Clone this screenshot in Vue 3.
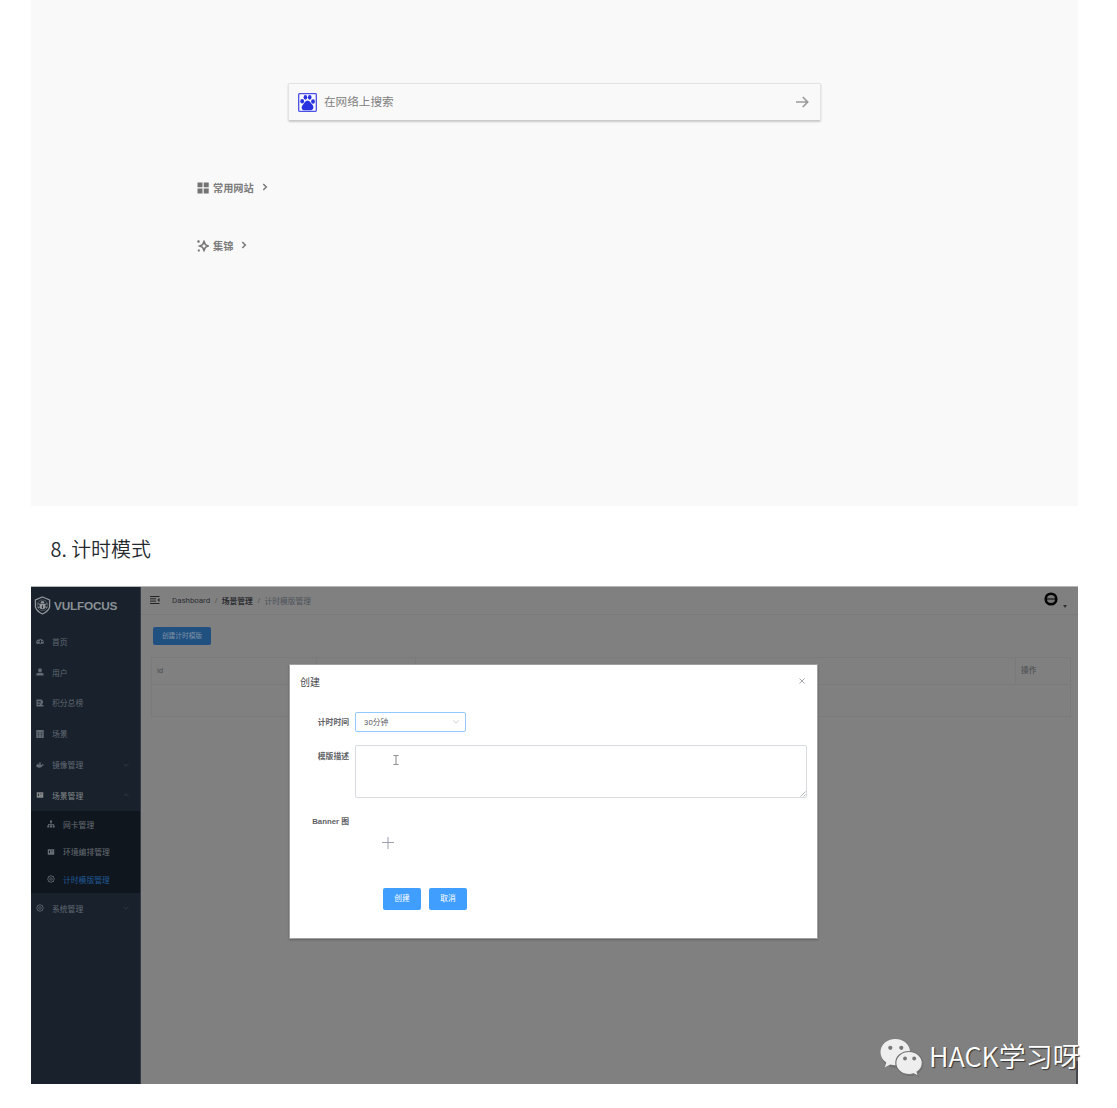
<script setup>
const menu = [
  { label: '首页', icon: 'dash' },
  { label: '用户', icon: 'user' },
  { label: '积分总榜', icon: 'score' },
  { label: '场景', icon: 'grid' },
  { label: '镜像管理', icon: 'docker', arrow: 'down' },
  {
    label: '场景管理',
    icon: 'card',
    arrow: 'up',
    open: true,
    children: [
      { label: '网卡管理', icon: 'tree' },
      { label: '环境编排管理', icon: 'card' },
      { label: '计时模版管理', icon: 'gear', active: true },
    ],
  },
  { label: '系统管理', icon: 'gear', arrow: 'down' },
]

const icons = {
  dash: '<path fill-rule="evenodd" d="M1 13.500A7.500 7.500 0 1 1 15 13.500ZM3 8v2h2V8ZM5 4.500v2h2v-2ZM11.500 8v2h2V8ZM10.500 4 7 9v3h3V9Z"/>',
  user: '<circle cx="8" cy="4.500" r="3.900"/><path d="M.8 15v-2.500Q.8 9.300 5 9.300h6q4.200 0 4.200 3.200V15Z"/>',
  score: '<path fill-rule="evenodd" d="M1 1h10l3 3v5h-2v3h3v3H1ZM3.500 4v1.300h6V4ZM3.500 7v1.300h6V7ZM3.500 10v1.300h4V10Z"/>',
  grid: '<path fill-rule="evenodd" d="M.5 0h15v16H.5ZM1.500 4.500v.7h13v-.7ZM1.500 9.500v.7h13v-.7ZM5.200 5v10h.7V5ZM10.200 5v10h.7V5Z"/>',
  docker: '<path d="M0 8h11q2-.3 2-2.500Q14 6 14.300 7 16 7 16 8q-1 1-2.500 1Q11.500 13.500 6 13.500 1 13.500 0 8ZM2 5.500h8v2H2ZM6 3h4v2H6Z"/>',
  card: '<path fill-rule="evenodd" d="M1.500 2.500h13v11h-13ZM4 5.500v4h2v-4ZM8 5.500v1.200h4V5.500Z"/>',
  tree: '<path d="M6 1h4v4H8.700v3H14v3h1.500v4h-4v-4h1.200V9.300h-4V11H10v4H6v-4h1.300V9.300h-4V11h1.200v4h-4v-4H2V8h5.300V5H6Z"/>',
  gear: '<path fill="none" stroke="currentColor" stroke-width="1.700" d="M8 1.200 10 2.500 13 3l.4 3L15 8l-1.600 2-.4 3-3 .5-2 1.300-2-1.300L3 13l-.4-3L1 8l1.600-2L3 3l3-.5Z"/><circle cx="8" cy="8" r="2.500" fill="none" stroke="currentColor" stroke-width="1.500"/>',
}
</script>

<template>
  <main class="article">
    <section class="browser">
      <div class="search">
        <svg class="baidu" viewBox="0 0 19 19">
          <rect x=".7" y=".7" width="17.600" height="17.600" rx=".8" fill="#fafaff" stroke="#4a50e4" stroke-width="1.300" />
          <g fill="#2932df">
            <ellipse cx="4.200" cy="8.300" rx="1.900" ry="2.200" />
            <ellipse cx="7.400" cy="4.300" rx="1.800" ry="2.400" />
            <ellipse cx="11.700" cy="4.300" rx="1.800" ry="2.400" />
            <ellipse cx="15" cy="8.500" rx="1.900" ry="2.200" />
            <path d="M9.600 7.600c2.300 0 2.700 2.300 4.300 3.700 2.500 2 1.800 5.900-1.100 5.900H6.500c-3 0-3.900-3.600-1.400-5.800C6.800 9.900 7.400 7.600 9.600 7.600Z" />
          </g>
        </svg>
        <span class="placeholder">在网络上搜索</span>
        <svg class="go" viewBox="0 0 14 12"><path d="M1 6h11.500M7.800 1l4.900 5-4.900 5" fill="none" stroke="#9a9a9a" stroke-width="1.700" /></svg>
      </div>
      <div class="shortcut first">
        <svg class="sicon" viewBox="0 0 12 12" fill="#747474"><path d="M.5.500h5v4.800h-5zM6.700.500h5v4.800h-5zM.5 6.600h5v4.800h-5zM6.700 6.600h5v4.800h-5z" /></svg>
        <span>常用网站</span>
        <svg class="chev" viewBox="0 0 6 8"><path d="M1.300 1l3 3-3 3" fill="none" stroke="#777" stroke-width="1.500" /></svg>
      </div>
      <div class="shortcut second">
        <svg class="sicon" viewBox="0 0 12 12" fill="none" stroke="#747474" stroke-width="1.500"><path d="M7 1.400 8.400 4.600 11.500 6 8.400 7.400 7 10.600 5.600 7.400 2.500 6 5.600 4.600Z" /><path d="M.3 1.500h2.400M1.500.3v2.400M.8 10.500h2M1.800 9.500v2" /></svg>
        <span>集锦</span>
        <svg class="chev" viewBox="0 0 6 8"><path d="M1.300 1l3 3-3 3" fill="none" stroke="#777" stroke-width="1.500" /></svg>
      </div>
    </section>

    <h2 class="heading">8. 计时模式</h2>

    <section class="shot">
      <aside class="side">
        <div class="brand">
          <svg class="shield" viewBox="0 0 18 20" fill="none" stroke="#929699">
            <path d="M9 1 16.500 4v7.500Q15.500 16 9 19 2.500 16 1.500 11.500V4Z" stroke-width="1.400" />
            <circle cx="9" cy="9.700" r="5.600" stroke-width=".5" />
            <path d="M6 8.300h6v3.400q0 2.300-3 2.300t-3-2.300ZM6.800 7.800q0-2.500 2.200-2.500t2.200 2.500Z" fill="#929699" stroke="none" />
            <path d="M4.200 8l2 1M13.800 8l-2 1M4.200 12l2-.7M13.800 12l-2-.7" stroke-width="1.100" />
            <path d="M9 10v3" stroke="#18212c" stroke-width="1" />
          </svg>
          <span>VULFOCUS</span>
        </div>
        <template v-for="item in menu" :key="item.label">
          <div class="item" :class="{ open: item.open }">
            <svg class="micon" viewBox="0 0 16 16" fill="currentColor" v-html="icons[item.icon]"></svg>
            <span>{{ item.label }}</span>
            <svg v-if="item.arrow" class="arrow" viewBox="0 0 6 4"><path :d="item.arrow === 'down' ? 'M.5.800 3 3.200 5.500.800' : 'M.5 3.200 3 .8 5.500 3.200'" /></svg>
          </div>
          <div v-if="item.children" class="sub">
            <div v-for="c in item.children" :key="c.label" class="subitem">
              <svg class="micon" viewBox="0 0 16 16" fill="currentColor" v-html="icons[c.icon]"></svg>
              <span :class="{ active: c.active }">{{ c.label }}</span>
            </div>
          </div>
        </template>
      </aside>

      <div class="content">
        <header class="nav">
          <svg class="burger" viewBox="0 0 10 8" fill="none" stroke="#242424"><path d="M0 .5h9.500M0 2.800h6M0 5.100h6M0 7.500h9.500" stroke-width="1" /><path d="M9.500 2v4L7.300 4Z" fill="#242424" stroke="none" /></svg>
          <span class="dash">Dashboard</span><i>/</i><b>场景管理</b><i>/</i><span class="last">计时模版管理</span>
          <svg class="avatar" viewBox="0 0 14 14"><circle cx="7" cy="7" r="5.300" fill="#777" stroke="#050505" stroke-width="2.600" /><path d="M3 7h8" stroke="#111" stroke-width="1.200" /></svg>
          <svg class="caret" viewBox="0 0 4 3"><path d="M0 0h4L2 3Z" fill="#303030" /></svg>
        </header>
        <button class="create">创建计时模版</button>
        <div class="table">
          <div class="row head">
            <span>id</span><span></span><span></span><span>操作</span>
          </div>
          <div class="row"></div>
        </div>
      </div>

      <div class="dialog">
        <div class="dhead">
          <span>创建</span>
          <svg class="close" viewBox="0 0 6 6"><path d="M.5.500l5 5M5.500.500l-5 5" stroke="#9a9da3" stroke-width=".9" /></svg>
        </div>
        <div class="field time">
          <label>计时时间</label>
          <div class="select">
            <span>30分钟</span>
            <svg viewBox="0 0 6 4"><path d="M.4.500 3 3.200 5.600.500" fill="none" stroke="#b5b9c1" stroke-width=".7" /></svg>
          </div>
        </div>
        <div class="field desc">
          <label>模版描述</label>
          <div class="textarea">
            <svg class="cursor" viewBox="0 0 6 10"><path d="M.5.500h2L3 1l.5-.5h2M3 1v8M.5 9.500h2L3 9l.5.500h2" fill="none" stroke="#666" stroke-width=".8" /></svg>
            <svg class="grip" viewBox="0 0 6 6"><path d="M.5 5.500l5-5M3.500 5.500l2-2" stroke="#aaa" stroke-width=".9" /></svg>
          </div>
        </div>
        <div class="field banner">
          <label>Banner 图</label>
          <svg class="plus" viewBox="0 0 12 12"><path d="M0 5.500h12M6 0v12" stroke="#9a9fab" stroke-width="1" /></svg>
        </div>
        <div class="actions">
          <button>创建</button>
          <button>取消</button>
        </div>
      </div>

      <div class="watermark">
        <svg viewBox="0 0 44 40">
          <g class="shade" fill="#555" transform="translate(1 1)"><ellipse cx="15" cy="15" rx="14.800" ry="14" /><ellipse cx="29" cy="25" rx="13.300" ry="12" /></g>
          <path fill="#eee" d="M15.300 1C7 1 .5 6.700.5 14.200c0 4.300 2.300 8 5.800 10.400L4.900 29.200l5.400-2.700c1.600.5 3.300.8 5 .8 8.200 0 14.800-5.900 14.800-13.100C30.100 6.900 23.500 1 15.300 1Z" />
          <path fill="#eee" stroke="#737373" stroke-width="1.200" d="M29 13.500c-7.300 0-13.200 5-13.200 11.500S21.700 36.500 29 36.500c1.600 0 3.200-.2 4.600-.7l5 2.600-1.500-4.300C40.300 32 42.300 28.700 42.300 25c0-6.500-6-11.500-13.300-11.500Z" />
          <g fill="#777"><circle cx="10.300" cy="9.800" r="2.100" /><circle cx="21.300" cy="9.800" r="2.100" /><circle cx="25" cy="20.500" r="1.900" /><circle cx="34.200" cy="20.500" r="1.900" /></g>
        </svg>
        <span>HACK学习呀</span>
      </div>
      <div class="edge"></div>
    </section>
  </main>
</template>

<style>
body {
  margin: 0;
  background: #fff;
}
</style>

<style scoped>
* {
  box-sizing: border-box;
}
.article {
  width: 1117px;
  height: 1108px;
  padding: 0 39px 0 31px;
  overflow: hidden;
  font-family: "Liberation Sans", "Noto Sans CJK SC", sans-serif;
}
svg {
  display: block;
  flex: none;
}
button {
  border: 0;
  padding: 0;
  font-family: inherit;
}
.browser {
  height: 506px;
  padding: 83px 0 0 166px;
  background: #f9f9f9;
}
.search {
  width: 533px;
  height: 38px;
  margin-left: 91px;
  padding: 0 11px 0 9px;
  display: flex;
  align-items: center;
  border: 1px solid #e4e4e4;
  border-bottom-color: #ccc;
  border-radius: 2px;
  box-shadow: 0 1px 2px rgba(0, 0, 0, .2);
  color: #808080;
}
.baidu {
  width: 19px;
  height: 19px;
}
.placeholder {
  margin-left: 7px;
  font-size: 11.600px;
  line-height: 18px;
}
.go {
  width: 14px;
  height: 12px;
  margin-left: auto;
}
.shortcut {
  height: 16px;
  display: flex;
  align-items: center;
  color: #7c7c7c;
  font-size: 10.200px;
  font-weight: 700;
  line-height: 16px;
}
.first {
  margin-top: 59px;
}
.second {
  margin-top: 42px;
}
.shortcut span {
  padding-top: 1px;
}
.sicon {
  width: 12px;
  height: 12px;
  margin-right: 4px;
}
.chev {
  width: 6px;
  height: 8px;
  margin: -2px 0 0 8px;
}
.heading {
  height: 80px;
  margin: 0;
  padding: 3px 0 0 19.500px;
  color: #24292e;
  font-family: "Noto Sans CJK SC", sans-serif;
  font-size: 19.900px;
  font-weight: 350;
  line-height: 80px;
}
.shot {
  position: relative;
  width: 1047px;
  height: 498px;
  display: flex;
  border-top: 1px solid #b5b5b5;
  background: #808080;
}
.side {
  width: 110px;
  background: #18212c;
  border-right: 1px solid #353b44;
}
.brand {
  height: 39px;
  padding: 0 0 2px 3px;
  display: flex;
  align-items: center;
  gap: 3px;
  color: #8b9095;
  font-size: 11.800px;
  font-weight: 700;
}
.brand span {
  padding-top: 1px;
  letter-spacing: -.2px;
}
.shield {
  width: 17px;
  height: 19px;
}
.item {
  height: 30.800px;
  padding-left: 5px;
  display: flex;
  align-items: center;
  color: #626a73;
  font-size: 7.800px;
}
.item span {
  margin-left: 8px;
}
.item.open {
  color: #858889;
}
.micon {
  width: 8px;
  height: 8px;
}
.arrow {
  width: 6px;
  height: 4px;
  margin-left: auto;
  margin-right: 11px;
  fill: none;
  stroke: #353e48;
  stroke-width: .8;
}
.sub {
  height: 82px;
  background: #0f161e;
}
.subitem {
  height: 27.400px;
  padding-left: 16px;
  display: flex;
  align-items: center;
  gap: 8px;
  color: #676d74;
  font-size: 7.800px;
}
.active {
  color: #205998;
}
.content {
  flex: 1;
}
.nav {
  height: 28px;
  padding: 0 11px 1px 9px;
  display: flex;
  align-items: center;
  border-bottom: 1px solid #797979;
  color: #2b2d30;
  font-size: 7.750px;
}
.dash {
  font-family: Roboto, sans-serif;
  font-size: 7.900px;
}
.burger {
  width: 10px;
  height: 8px;
  margin-right: 12px;
}
.nav i {
  width: 11.700px;
  text-align: center;
  color: #505050;
  font-style: normal;
}
.last {
  color: #4c525a;
}
.avatar {
  width: 14px;
  height: 14px;
  margin: -2px 5px 0 auto;
}
.caret {
  width: 4px;
  height: 3px;
  margin-top: 12px;
}
.create {
  display: block;
  width: 58px;
  height: 18px;
  margin: 12px 0 0 12px;
  border-radius: 2px;
  background: #205080;
  color: #8193a5;
  font-size: 6.700px;
  line-height: 18px;
}
.table {
  width: 920px;
  height: 60px;
  margin: 12px 0 0 10px;
  border: 1px solid #7a7a7a;
}
.row {
  height: 27px;
}
.head {
  display: grid;
  grid-template-columns: 165px 99px 600px 1fr;
  align-items: stretch;
  border-bottom: 1px solid #7a7a7a;
  color: #484a4e;
  font-size: 7.700px;
  line-height: 26px;
}
.head span {
  padding-left: 5px;
}
.head span:not(:last-child) {
  border-right: 1px solid #7a7a7a;
}
.dialog {
  position: absolute;
  left: 258px;
  top: 77px;
  width: 529px;
  height: 275px;
  background: #fff;
  border: 1px solid #a0a0a0;
  box-shadow: 0 1px 2px rgba(0, 0, 0, .25);
  color: #606266;
}
.dhead {
  height: 34px;
  padding: 0 12px 2px 10px;
  display: flex;
  align-items: center;
  justify-content: space-between;
  color: #45474a;
  font-size: 10px;
}
.close {
  width: 6px;
  height: 6px;
  margin-top: -1px;
}
.field {
  display: flex;
  align-items: flex-start;
}
.field label {
  width: 59px;
  margin-right: 6px;
  text-align: right;
  font-size: 7.800px;
  font-weight: 700;
  line-height: 21px;
}
.time {
  height: 20px;
  margin-top: 13px;
}
.select {
  width: 111px;
  height: 20px;
  padding: 0 6px 1px 8px;
  display: flex;
  align-items: center;
  justify-content: space-between;
  border: 1px solid #93c9ff;
  border-radius: 2px;
  font-family: Roboto, "Noto Sans CJK SC", sans-serif;
  font-size: 7.800px;
}
.select svg {
  width: 6px;
  height: 4px;
  margin-top: 1px;
}
.desc {
  margin-top: 13px;
}
.desc label {
  line-height: 23px;
}
.textarea {
  width: 452px;
  height: 53px;
  display: flex;
  justify-content: space-between;
  border: 1px solid #d7dae0;
  border-radius: 2px;
}
.cursor {
  width: 6px;
  height: 10px;
  margin: 9px 0 0 37px;
}
.grip {
  width: 6px;
  height: 6px;
  align-self: flex-end;
}
.banner {
  margin-top: 13px;
}
.plus {
  width: 12px;
  height: 12px;
  margin: 26px 0 0 27px;
}
.actions {
  margin: 39px 0 0 93px;
  display: flex;
  gap: 8px;
}
.actions button {
  width: 38px;
  height: 22px;
  border-radius: 2px;
  background: #409eff;
  color: #fff;
  font-size: 7.700px;
  line-height: 22px;
}
.watermark {
  position: absolute;
  left: 849px;
  top: 451px;
  display: flex;
  align-items: center;
  color: #fff;
  font-family: "Noto Sans CJK SC", sans-serif;
  font-size: 27px;
  font-weight: 350;
  line-height: 40px;
  white-space: nowrap;
}
.watermark svg {
  width: 44px;
  height: 40px;
}
.watermark span {
  margin: -4px 0 0 5px;
  text-shadow: 1px 1px 1px #333;
}
.shade {
  opacity: .35;
}
.edge {
  position: absolute;
  right: 0;
  bottom: 0;
  width: 2px;
  height: 23px;
  background: #43474b;
}
</style>
